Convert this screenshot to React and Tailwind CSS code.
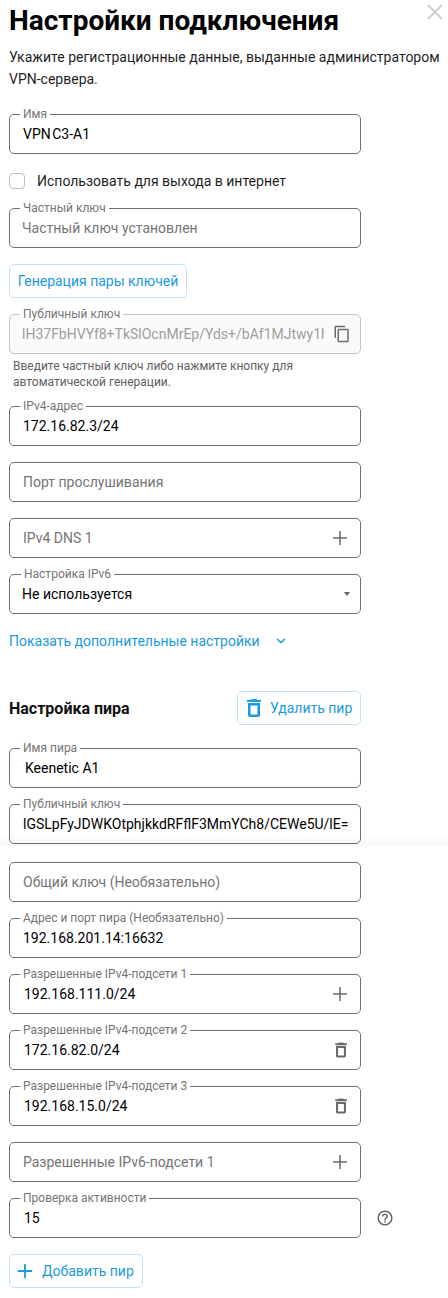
import React from 'react';
import { Plus, X, ChevronDown } from 'lucide-react';

const CopyIcon = () => (
  <svg width="18" height="18" viewBox="0 0 24 24" fill="#6b6b6b">
    <path d="M16 1H4c-1.100 0-2 .9-2 2v14h2V3h12V1zm3 4H8c-1.100 0-2 .9-2 2v14c0 1.100.9 2 2 2h11c1.100 0 2-.9 2-2V7c0-1.100-.9-2-2-2zm0 16H8V7h11v14z" />
  </svg>
);

const TrashIcon = ({ color = '#6b6b6b', size = 20 }) => (
  <svg width={size} height={size} viewBox="0 0 24 24" fill={color}>
    <path d="M6 19c0 1.100.9 2 2 2h8c1.100 0 2-.9 2-2V7H6v12zM8.500 9.500h7v9h-7v-9zm7-5.500-1-1h-5l-1 1H5v2h14V4h-3.500z" fillRule="evenodd" />
  </svg>
);

const HelpIcon = () => (
  <svg width="18" height="18" viewBox="0 0 24 24" fill="#636363">
    <path d="M11 18h2v-2h-2v2zm1-16C6.480 2 2 6.480 2 12s4.480 10 10 10 10-4.480 10-10S17.520 2 12 2zm0 18c-4.410 0-8-3.590-8-8s3.590-8 8-8 8 3.590 8 8-3.590 8-8 8zm0-14c-2.210 0-4 1.790-4 4h2c0-1.100.9-2 2-2s2 .9 2 2c0 2-3 1.750-3 5h2c0-2.250 3-2.500 3-5 0-2.210-1.790-4-4-4z" />
  </svg>
);

const Field = ({ label, value, placeholder, icon, disabled, className = '', textClass = 'pl-[13px]', labelClass = 'left-[10px]' }) => (
  <div
    className={`relative flex h-10 w-[352px] items-center rounded-[5px] border pr-[9px] ${
      disabled ? 'border-[#c4c4c4] bg-[#fafafa]' : 'border-[#6e6e6e]'
    } ${className}`}
  >
    {label && (
      <span className={`absolute top-[-8px] bg-white px-[3px] text-xs leading-[14px] text-[#757575] ${labelClass}`}>
        {label}
      </span>
    )}
    <span
      className={`min-w-0 flex-1 overflow-hidden whitespace-nowrap text-sm ${textClass} ${
        disabled ? 'text-[#9e9e9e]' : value ? 'text-black' : 'text-[#757575]'
      }`}
    >
      {value || placeholder}
    </span>
    {icon}
  </div>
);

const OutlineButton = ({ children, className = '' }) => (
  <button className={`flex h-[34px] items-center rounded-[5px] border border-[#bfe3f7] text-sm text-[#1a9ae0] ${className}`}>
    {children}
  </button>
);

const plus = <Plus size={22} strokeWidth={1.7} color="#6b6b6b" />;
const trash = <TrashIcon />;

export default function App() {
  return (
    <div className="relative h-[1298px] w-[448px] overflow-hidden bg-white pl-[9px] font-['Roboto',sans-serif]">
      {/* seam between two stitched screenshots */}
      <div className="absolute left-0 top-[832px] h-[14px] w-full bg-gradient-to-b from-white to-[#f8f8f8]" />

      <X size={26} strokeWidth={1.8} color="#cfcfcf" className="absolute left-[422px] top-[-1px]" />

      <div className="relative flex flex-col items-start">
        <h1 className="mt-[3px] text-[28px] font-bold leading-[36px] text-black">Настройки подключения</h1>
        <p className="mt-[7px] w-[436px] text-sm leading-[22px] text-[#1f1f1f]">
          Укажите регистрационные данные, выданные администратором VPN-сервера.
        </p>

        <Field label="Имя" value="VPN C3-A1" className="mt-[24px]" textClass="pl-[13px] [word-spacing:-2px]" />

        <label className="mt-[19px] flex h-4 items-center">
          <span className="h-4 w-4 rounded-[4px] border border-[#bdbdbd]" />
          <span className="ml-3 text-sm text-[#1f1f1f]">Использовать для выхода в интернет</span>
        </label>

        <Field label="Частный ключ" placeholder="Частный ключ установлен" className="mt-[19px]" textClass="pl-3" />

        <OutlineButton className="mt-4 w-[178px] justify-center">Генерация пары ключей</OutlineButton>

        <Field
          label="Публичный ключ"
          value="lH37FbHVYf8+TkSlOcnMrEp/Yds+/bAf1MJtwy1hPqE="
          disabled
          className="mt-4"
          textClass="pl-3"
          icon={<span className="ml-[9px]"><CopyIcon /></span>}
        />
        <p className="ml-[4px] mt-[4px] w-[340px] text-xs leading-4 text-[#616161]">
          Введите частный ключ либо нажмите кнопку для автоматической генерации.
        </p>

        <Field label="IPv4-адрес" value="172.16.82.3/24" className="mt-4" />
        <Field placeholder="Порт прослушивания" className="mt-4" />
        <Field placeholder="IPv4 DNS 1" className="mt-4" icon={plus} />
        <Field
          label="Настройка IPv6"
          value="Не используется"
          className="mt-4"
          textClass="pl-3"
          labelClass="left-[11px]"
          icon={<span className="mr-px h-0 w-0 border-x-[3px] border-t-[4px] border-x-transparent border-t-[#666]" />}
        />

        <div className="mt-[18px] flex h-[18px] items-center text-sm text-[#1a9ae0]">
          Показать дополнительные настройки
          <ChevronDown size={14} strokeWidth={2.5} className="ml-[14px]" />
        </div>

        <div className="mt-[41px] flex w-[352px] items-center justify-between">
          <h2 className="pt-px text-base font-bold text-[#111]">Настройка пира</h2>
          <OutlineButton className="w-[124px] pl-1">
            <TrashIcon color="#1a9ae0" size={24} />
            <span className="ml-1">Удалить пир</span>
          </OutlineButton>
        </div>

        <Field label="Имя пира" value="Keenetic A1" className="mt-[23px]" textClass="pl-[15px]" />
        <Field
          label="Публичный ключ"
          value="lGSLpFyJDWKOtphjkkdRFflF3MmYCh8/CEWe5U/lE="
          className="mt-4"
        />
        <Field placeholder="Общий ключ (Необязательно)" className="mt-[18px]" />
        <Field label="Адрес и порт пира (Необязательно)" value="192.168.201.14:16632" className="mt-4" />
        <Field label="Разрешенные IPv4-подсети 1" value="192.168.111.0/24" className="mt-4" textClass="pl-[14px]" icon={plus} />
        <Field label="Разрешенные IPv4-подсети 2" value="172.16.82.0/24" className="mt-4" textClass="pl-[14px]" icon={trash} />
        <Field label="Разрешенные IPv4-подсети 3" value="192.168.15.0/24" className="mt-4" textClass="pl-[14px]" icon={trash} />
        <Field placeholder="Разрешенные IPv6-подсети 1" className="mt-4" icon={plus} />

        <div className="mt-4 flex items-center">
          <Field label="Проверка активности" value="15" textClass="pl-[14px]" />
          <span className="ml-[15px]"><HelpIcon /></span>
        </div>

        <OutlineButton className="mt-4 w-[134px] pl-[4px]">
          <Plus size={22} strokeWidth={2} />
          <span className="ml-[6px]">Добавить пир</span>
        </OutlineButton>
      </div>
    </div>
  );
}
